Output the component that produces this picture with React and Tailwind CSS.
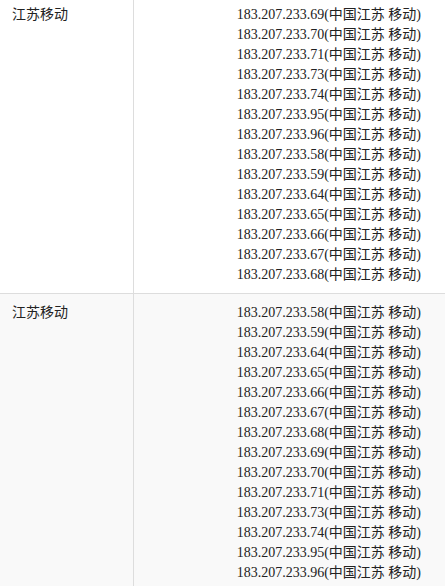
import React from 'react';

const groups = [
    {
        name: '江苏移动',
        bg: 'bg-white',
        ips: ['69', '70', '71', '73', '74', '95', '96', '58', '59', '64', '65', '66', '67', '68'],
    },
    {
        name: '江苏移动',
        bg: 'bg-[#f9f9f9]',
        ips: ['58', '59', '64', '65', '66', '67', '68', '69', '70', '71', '73', '74', '95', '96'],
    },
];

export default function App() {
    return (
        <div className="w-[445px] h-[586px] overflow-hidden bg-white text-[#222] text-[14px] leading-[20px] font-['Liberation_Serif','Noto_Sans_CJK_SC',serif]">
            <div className="-mt-1">
                {groups.map((g, i) => (
                    <div key={i} className={`flex border-b border-[#dddddd] ${g.bg}`}>
                        <div className="w-[134px] shrink-0 border-r border-[#dddddd] pl-3 pt-[9px] pb-2">
                            {g.name}
                        </div>
                        <div className="flex-1 flex flex-col items-end pr-6 pt-[9px] pb-2">
                            {g.ips.map((ip) => (
                                <div key={ip} className="whitespace-nowrap">
                                    183.207.233.{ip}(中国江苏 移动)
                                </div>
                            ))}
                        </div>
                    </div>
                ))}
            </div>
        </div>
    );
}
